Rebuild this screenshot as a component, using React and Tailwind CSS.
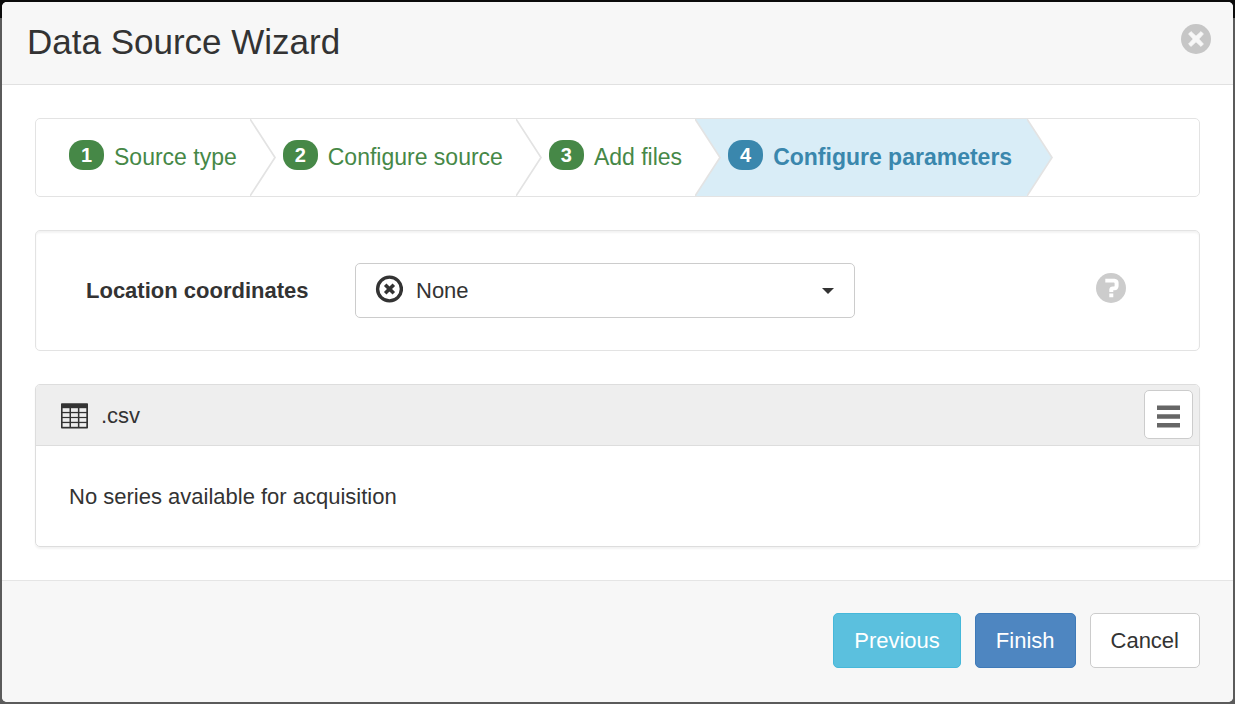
import React from "react";

const steps = [
  { number: 1, label: "Source type" },
  { number: 2, label: "Configure source" },
  { number: 3, label: "Add files" },
  { number: 4, label: "Configure parameters", active: true },
];

function CloseIcon() {
  return (
    <svg viewBox="0 0 30 30" className="block size-[30px]" aria-hidden="true">
      <circle cx="15" cy="15" r="15" fill="#c6c6c6" />
      <path
        d="M7.6 10 10 7.6 15 12.2 20 7.6 22.4 10 17.8 15 22.4 20 20 22.4 15 17.8 10 22.4 7.6 20 12.2 15Z"
        fill="#f7f7f7"
        stroke="#f7f7f7"
        strokeWidth="0.8"
        strokeLinejoin="round"
      />
    </svg>
  );
}

function HelpIcon() {
  return (
    <svg viewBox="0 0 30 30" className="block size-[30px]" aria-hidden="true">
      <circle cx="15" cy="15" r="15" fill="#cccccc" />
      <path
        d="M9.3 5.7H18.5Q22.6 6.2 22.6 9.7V13.2Q22 17 18.8 17.3H17.3V19H13.3V16.2Q13.6 13.6 16.8 13.4H18.3Q18.6 13.2 18.6 12.6V10.4Q18.5 9.6 17.8 9.6H9.3ZM13.3 20.4H17.3V24.3H13.3Z"
        fill="#ffffff"
      />
    </svg>
  );
}

function NoneIcon() {
  return (
    <svg viewBox="0 0 28 28" className="block size-7" aria-hidden="true">
      <circle cx="14.5" cy="14" r="11.9" fill="none" stroke="#333333" strokeWidth="3.4" />
      <path d="M10.2 9.7 18.8 18.3M18.8 9.7 10.2 18.3" stroke="#333333" strokeWidth="3.6" />
    </svg>
  );
}

function TableIcon() {
  return (
    <svg viewBox="0 0 28 26" className="mt-[2px] block h-[26px] w-7" aria-hidden="true">
      <rect x="0" y="0.2" width="27" height="25.4" rx="0.8" fill="#333333" />
      <g fill="#eeeeee">
        {[5.2, 10.2, 15.1, 20.1].map((y) => (
          <g key={y}>
            <rect x="1.6" y={y} width="6.9" height="3.7" />
            <rect x="10" y={y} width="6.9" height="3.7" />
            <rect x="18.4" y={y} width="6.9" height="3.7" />
          </g>
        ))}
      </g>
    </svg>
  );
}

function Step({ number, label, active }) {
  return (
    <li
      aria-current={active ? "step" : undefined}
      className={
        active
          ? "relative flex items-center bg-[#d9edf7] pr-[15px] pl-[33px] font-bold text-[#3a87ad]"
          : "relative z-10 flex items-center pr-[13px] pl-[33px] text-[#468847]"
      }
    >
      <span
        className={
          active
            ? "mb-[6px] flex h-[30px] w-[35px] items-center justify-center rounded-[14px] bg-[#3a87ad] text-xl font-bold text-white"
            : "mb-[6px] flex h-[30px] w-[35px] items-center justify-center rounded-[14px] bg-[#468847] text-xl font-bold text-white"
        }
      >
        {number}
      </span>
      <span className="ml-[10px] whitespace-nowrap">{label}</span>
      <svg
        viewBox="0 0 26 77"
        preserveAspectRatio="none"
        className="absolute top-0 left-full h-full w-[26px]"
        aria-hidden="true"
      >
        <path d="M0 0 25 38.5 0 77Z" fill={active ? "#d9edf7" : "#ffffff"} />
        <path d="M0 0 25 38.5 0 77" fill="none" stroke="#e3e3e3" strokeWidth="1.7" />
      </svg>
    </li>
  );
}

export default function App() {
  return (
    <div className="min-h-screen bg-[linear-gradient(to_bottom,#0b0b0b_18px,#5b5b5b_18px)] p-[2px] font-['Liberation_Sans',Arial,sans-serif] text-[22px] leading-[31px] text-[#333333]">
      <div role="dialog" aria-labelledby="wizard-title" className="overflow-hidden rounded-[5px] bg-white">
        <header className="flex items-start justify-between border-b border-[#e1e1e1] bg-[#f7f7f7] pt-[15px] pr-[22px] pb-[17px] pl-[25px]">
          <h1 id="wizard-title" className="text-[35px] leading-[50px]">Data Source Wizard</h1>
          <button type="button" aria-label="Close" className="mt-[7px]">
            <CloseIcon />
          </button>
        </header>

        <main className="flex flex-col gap-[33px] p-[33px]">
          <ol className="flex h-[79px] overflow-hidden rounded-[5px] border border-[#e3e3e3] text-[23px]">
            {steps.map((step) => (
              <Step key={step.number} {...step} />
            ))}
          </ol>

          <section className="flex items-center rounded-[5px] border border-[#e3e3e3] py-8 pr-[73px] pl-[50px] shadow-[inset_0_2px_2px_rgba(0,0,0,0.05)]">
            <label htmlFor="location" className="w-[269px] shrink-0 font-bold">
              Location coordinates
            </label>
            <div className="relative max-w-[500px] flex-1">
              <select
                id="location"
                defaultValue="none"
                className="block h-[55px] w-full appearance-none rounded-[5px] border border-[#cccccc] bg-white pr-12 pl-[60px]"
              >
                <option value="none">None</option>
              </select>
              <span className="pointer-events-none absolute inset-y-0 left-5 flex items-center pb-[3px]">
                <NoneIcon />
              </span>
              <span className="pointer-events-none absolute inset-y-0 right-[21px] flex items-center">
                <svg viewBox="0 0 12 6" className="block h-[6px] w-3" aria-hidden="true">
                  <path d="M0 0H12L6 6Z" fill="#333333" />
                </svg>
              </span>
            </div>
            <button type="button" aria-label="Help" className="mb-[6px] ml-auto">
              <HelpIcon />
            </button>
          </section>

          <section className="rounded-[5px] border border-[#dddddd] shadow-[0_2px_2px_rgba(0,0,0,0.05)]">
            <div className="flex h-[61px] items-center rounded-t-[4px] border-b border-[#dddddd] bg-[#eeeeee] pr-[6px] pl-[25px]">
              <TableIcon />
              <h2 className="ml-3">.csv</h2>
              <button
                type="button"
                aria-label="Menu"
                className="mb-[2px] ml-auto flex size-[49px] items-center justify-center rounded-[5px] border border-[#cccccc] bg-white"
              >
                <svg viewBox="0 0 23 23" className="mt-1 block size-[23px]" aria-hidden="true">
                  <path d="M0 .5H23V5H0ZM0 9.3H23V13.8H0ZM0 18H23V22.5H0Z" fill="#666666" />
                </svg>
              </button>
            </div>
            <p className="px-[33px] pt-[35px] pb-[34px]">No series available for acquisition</p>
          </section>
        </main>

        <footer className="flex justify-end gap-[14px] border-t border-[#e5e5e5] bg-[#f7f7f7] px-[33px] pt-8 pb-[34px]">
          <button type="button" className="h-[55px] rounded-[5px] border border-[#46b8da] bg-[#5bc0de] px-5 text-white">
            Previous
          </button>
          <button type="button" className="h-[55px] rounded-[5px] border border-[#3f7ab8] bg-[#4e86c1] px-5 text-white">
            Finish
          </button>
          <button type="button" className="h-[55px] rounded-[5px] border border-[#cccccc] bg-white px-5">
            Cancel
          </button>
        </footer>
      </div>
    </div>
  );
}
